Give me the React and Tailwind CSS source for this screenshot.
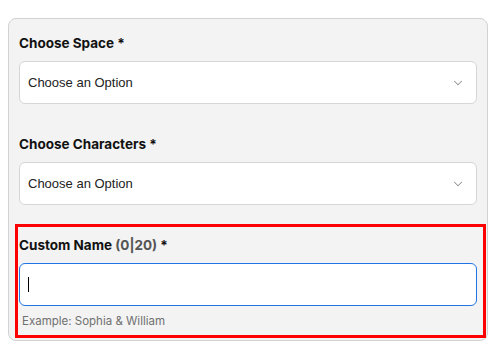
import { ChevronDown } from 'lucide-react'

function SelectField({ label }) {
  return (
    <div>
      <div className="text-[13.5px] leading-5 font-bold text-[#111] font-['Inter',sans-serif]">{label} *</div>
      <div className="mt-2 h-[43px] flex items-center justify-between bg-white border border-[#d6d6d6] rounded-md pl-2 pr-[11px]">
        <span className="text-[13px] pt-px text-[#222] font-['Liberation_Sans',Arial,sans-serif]">Choose an Option</span>
        <ChevronDown size={14} strokeWidth={1.75} className="text-[#909090]" />
      </div>
    </div>
  )
}

export default function App() {
  return (
    <div className="w-[493px] h-[358px] bg-white pt-[18px] pl-2">
      <div className="w-[480px] bg-[#f3f3f3] border border-[#d2d2d2] rounded-lg pt-[14px] px-[10px] pb-3">
        <SelectField label="Choose Space" />
        <div className="mt-[30px]">
          <SelectField label="Choose Characters" />
        </div>
        <div className="relative mt-[30px]">
          <div className="absolute -left-1 -right-[9px] -top-[11px] -bottom-[10px] border-[3px] border-[#ff0000] pointer-events-none" />
          <div className="text-[13.5px] leading-5 font-bold text-[#111] font-['Inter',sans-serif]">
            Custom Name <span className="text-[#555]">(0|20)</span> *
          </div>
          <div className="mt-2 h-[43px] flex items-center bg-white border border-[#1f74e6] rounded-md pl-2">
            <span className="w-px h-[15px] bg-black" />
          </div>
          <div className="mt-2 text-[11.5px] leading-[14px] text-[#707070] pl-[3px] font-['Inter',sans-serif]">
            Example: Sophia &amp; William
          </div>
        </div>
      </div>
    </div>
  )
}
